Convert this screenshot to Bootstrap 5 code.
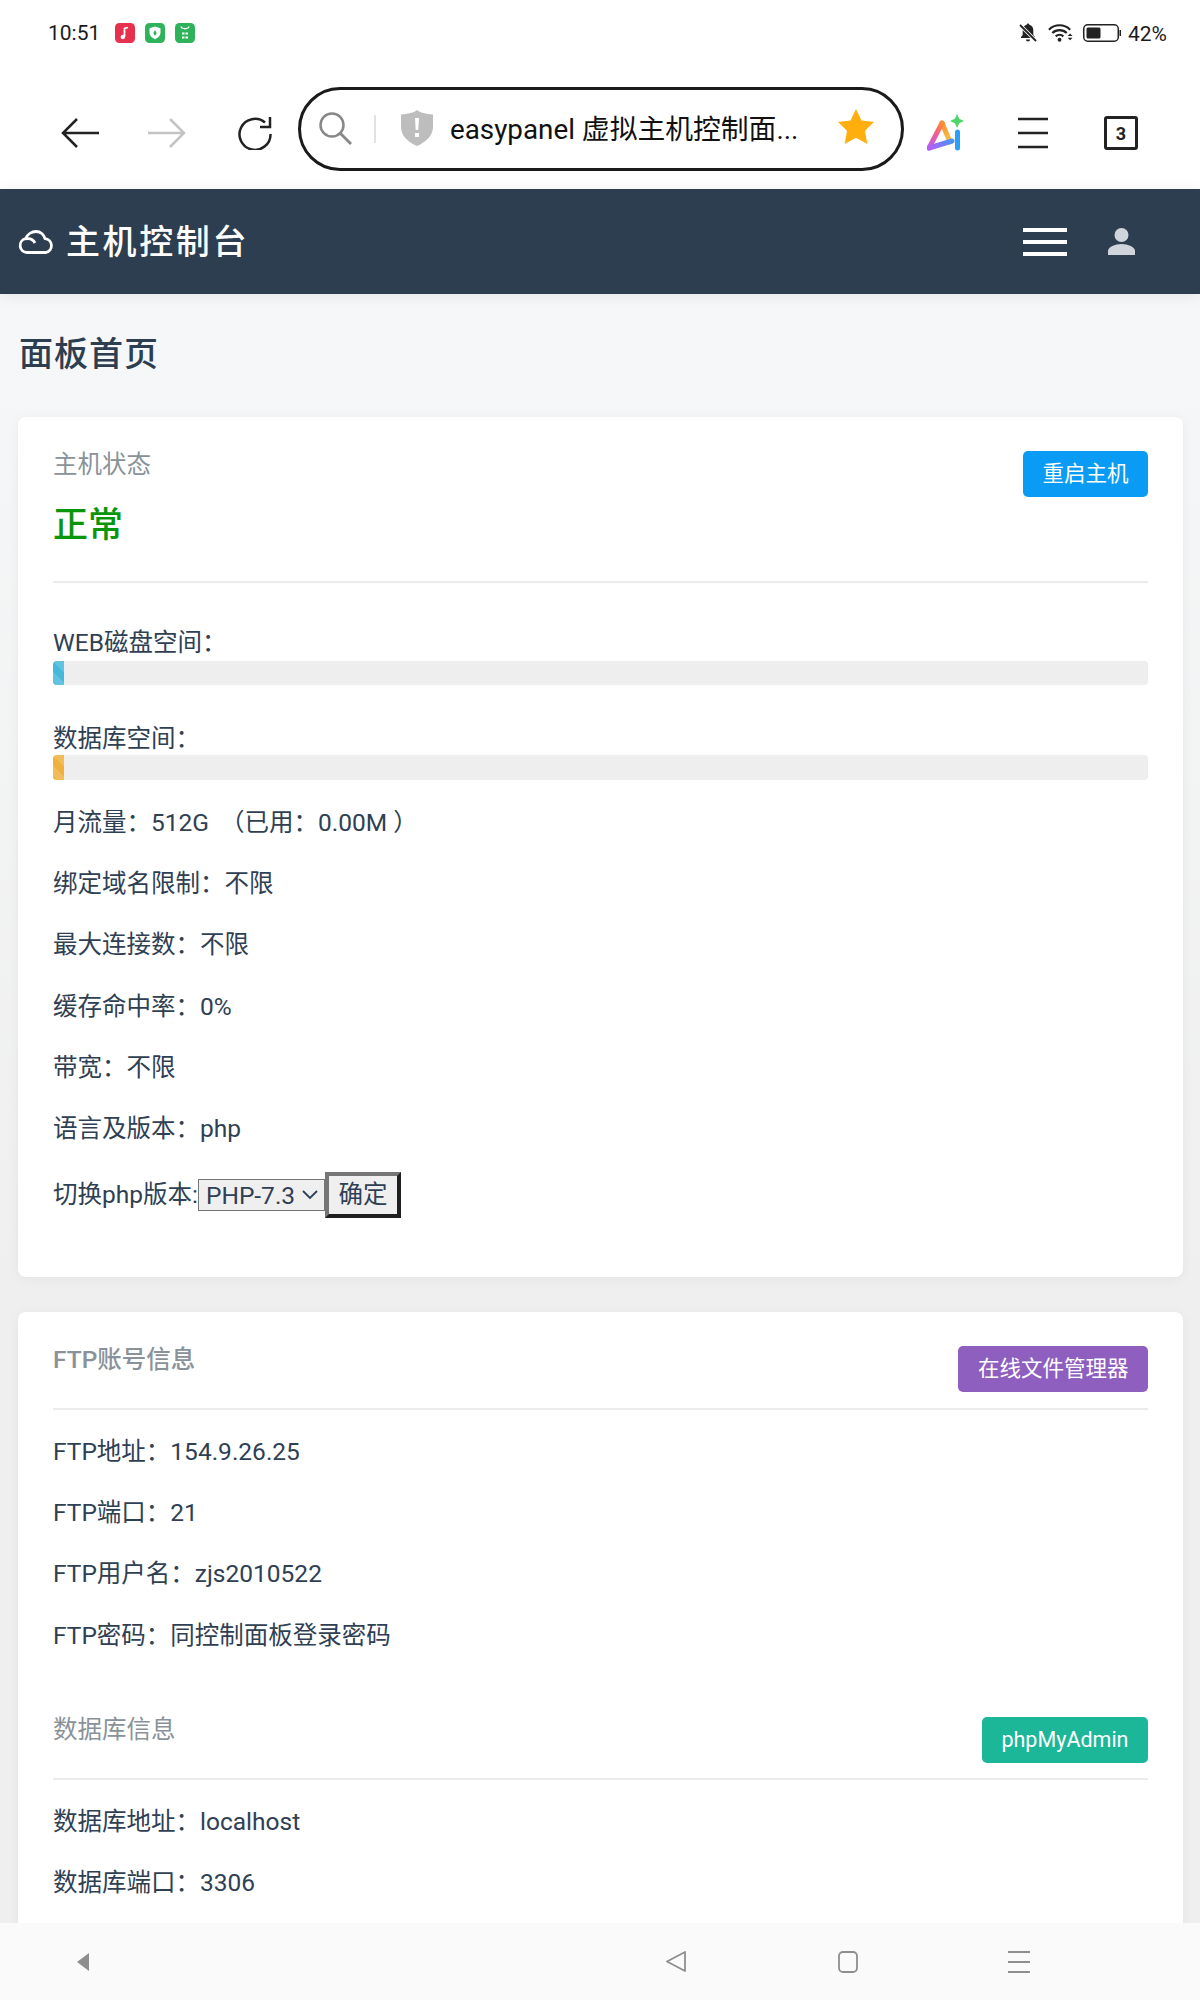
<!DOCTYPE html>
<html lang="zh">
<head>
<meta charset="utf-8">
<title>easypanel</title>
<link href="https://cdn.jsdelivr.net/npm/bootstrap@5.3.0/dist/css/bootstrap.min.css" rel="stylesheet">
<style>
html,body{margin:0;background:#fff}
body{font-family:"Roboto","Noto Sans CJK SC",sans-serif;color:#2f4053}
.screen{height:2000px;overflow:hidden}
.status-strip{height:66px;padding:0 33px 0 48px;color:#1b1b1b;font-size:21px}
.status-time{margin-top:2px}
.status-apps{gap:10px;margin-left:15px}
.status-right{gap:10px}
.status-pct{margin-left:-3px;margin-top:3px}
.toolbar{height:123px;padding:11px 0 0 61px}
.tool-back{width:38px;height:30px}
.tool-fwd{width:38px;height:30px;margin-left:49px}
.tool-reload{width:34px;height:34px;margin-left:52px}
.addr{width:606px;height:84px;margin:0 0 9px 26px;border:3px solid #1a1a1a;border-radius:42px;padding:0 27px 0 18px}
.addr-sep{width:2px;height:28px;background:#e2e2e2;margin:0 25px 0 22px}
.addr-shield{margin-top:-2px}
.addr-text{font-size:27.8px;color:#111;white-space:nowrap;margin:0 0 0 17px;padding-top:2px}
.addr-star{margin-left:auto;margin-bottom:4px}
.tool-ai{margin-left:23px}
.tool-menu{margin-left:53px}
.tool-tabs{width:34px;height:34px;border:3px solid #222;border-radius:3px;margin-left:56px;font-size:18px;font-weight:700;color:#222}
.panel-bar{height:105px;background:#2c3e50;padding:0 65px 0 18px;box-shadow:0 2px 14px rgba(0,0,0,.08);position:relative}
.panel-title{font-size:34px;font-weight:500;letter-spacing:2.600px;color:#fff;margin-left:12px;line-height:1}
.panel-burger{width:44px;height:28px;flex-direction:column;justify-content:space-between}
.panel-burger i{display:block;height:4px;background:#fff}
.panel-user{margin-left:41px}
.page-body{background:#f0f0f0 linear-gradient(#f6f7f8,#efefef 1000px,#efefef);padding:0 17px 0 18px;min-height:0}
.page-heading{font-size:34px;font-weight:500;letter-spacing:1px;color:#2c3e50;line-height:46px;margin:37px 0 0 1px}
.sheet{background:#fff;border-radius:8px;box-shadow:0 2px 12px rgba(0,0,0,.05);padding:0 35px}
.sheet-a{margin-top:40px;height:860px}
.sheet-b{margin-top:35px;padding-bottom:90px}
.head-a{padding:30px 0 31px}
.head-b{padding:34px 0 16px}
.head-c{padding:38px 0 15px}
.muted-label{font-size:24.5px;line-height:36px;color:#8a9299}
.head-b .muted-label{margin-top:-4px}
.head-c .muted-label{margin-top:-5px}
.status-ok{font-size:35px;line-height:48px;color:#0a960a;font-weight:500;margin-top:19px}
.restart-wrap{padding-top:4px}
.head-line{border-bottom:2px solid #e9ebec}
.act-btn{font-size:21.5px;line-height:30px;height:46px;padding:8px 19.500px;border:0;border-radius:5px;color:#fff}
.act-blue{background:#0a9bf5}
.act-purple{background:#8f5fc0}
.act-teal{background:#1cb698}
.info-row{font-size:24.5px;line-height:36px;margin:0 0 25.200px}
.first-row{margin-top:24px}
.gauge-label{font-size:24.5px;line-height:36px;margin:0}
.gauge-label-web{margin-top:42px}
.gauge-label-db{margin:36px 0 -2px}
.gauge{height:24px;background:#eee;border-radius:4px;overflow:hidden}
.gauge-db{height:25px;margin-bottom:25px}
.gauge-fill{width:11px;height:100%;background-size:20px 20px;background-image:linear-gradient(45deg,rgba(255,255,255,.15) 25%,transparent 25%,transparent 50%,rgba(255,255,255,.15) 50%,rgba(255,255,255,.15) 75%,transparent 75%,transparent)}
.fill-info{background-color:#46b8da}
.fill-warn{background-color:#f0b03c}
.php-form{font-size:24.5px;line-height:36px}
.php-select{font-family:inherit;font-size:24.5px;line-height:normal;color:#2f4053;height:32px;width:127px;padding:0 0 0 7px;border:1.5px solid #767676;border-radius:0;appearance:none;background:#efefef url("data:image/svg+xml,%3Csvg xmlns='http://www.w3.org/2000/svg' width='16' height='10'%3E%3Cpath d='M1 1l7 7 7-7' fill='none' stroke='%232f4053' stroke-width='1.800'/%3E%3C/svg%3E") no-repeat right 6px center}
.php-submit{font-family:inherit;font-size:24.5px;color:#2f4053;background:#efefef;border:4px solid;border-color:#767676 #1f1f1f #1f1f1f #767676;height:46px;width:76px;padding:0;line-height:1}
.navstrip{height:77px;background:#fafafa}
.nav-a{margin-left:77px}
.nav-b{margin-left:577px}
.nav-c{margin-left:152px}
.nav-d{margin-left:150px}
</style>
</head>
<body>
<div class="screen d-flex flex-column">
  <div class="status-strip d-flex align-items-center flex-shrink-0">
    <span class="status-time">10:51</span>
    <div class="status-apps d-flex">
      <svg width="20" height="20" viewBox="0 0 20 20"><rect width="20" height="20" rx="4.500" fill="#e6304e"/><path d="M9.500 14V5.500l3.500-1" fill="none" stroke="#fff" stroke-width="1.800"/><circle cx="7.800" cy="14" r="2.200" fill="#fff"/></svg>
      <svg width="20" height="20" viewBox="0 0 20 20"><rect width="20" height="20" rx="4.500" fill="#2fb35a"/><path d="M10 3.500l5.500 1.800v4.500c0 3-2.500 5.200-5.500 6.500-3-1.300-5.500-3.500-5.500-6.500V5.300z" fill="#fff"/><path d="M10 7l1.700 3-1.700 3-1.700-3z" fill="#2fb35a"/></svg>
      <svg width="20" height="20" viewBox="0 0 20 20"><rect width="20" height="20" rx="4.500" fill="#2fb35a"/><path d="M6 3.500c.5 3 7.500 3 8 0" fill="none" stroke="#fff" stroke-width="1.300"/><path d="M7 10.500h2.500M10.500 10.500H13M7 14.500h2.500M10.500 14.500H13" stroke="#fff" stroke-width="1.800"/></svg>
    </div>
    <div class="ms-auto d-flex align-items-center status-right">
      <svg width="20" height="20" viewBox="0 0 20 20"><path d="M10 .5a1.300 1.300 0 0 1 1.300 1.300c2.600.6 4 2.700 4 5.200v5l1.700 2v1H3v-1l1.700-2V7c0-2.500 1.400-4.600 4-5.200A1.300 1.300 0 0 1 10 .5zM8 16.500h4a2 2 0 0 1-4 0z" fill="#222"/><path d="M2 2l16 16" stroke="#fff" stroke-width="3.500"/><path d="M2 2l16 16" stroke="#222" stroke-width="1.800"/></svg>
      <svg width="25" height="20" viewBox="0 0 26 20"><path d="M1 6.500C7 .5 17 .5 23 6.500M4.500 10c4-4 11-4 15 0M8 13.500c2.300-2 5.700-2 8 0" fill="none" stroke="#222" stroke-width="2.200"/><circle cx="12" cy="17" r="2" fill="#222"/><path d="M20.500 13h5l-2.500-2.500zM20.500 15h5L23 17.500z" fill="#222"/></svg>
      <svg width="38" height="18" viewBox="0 0 38 18"><rect x=".75" y=".75" width="34.500" height="16.500" rx="4" fill="#fff" stroke="#222" stroke-width="1.500"/><rect x="3.500" y="3.500" width="14" height="11" rx="1.500" fill="#222"/><rect x="36.500" y="6" width="1.500" height="6" fill="#222"/></svg>
      <span class="status-pct">42%</span>
    </div>
  </div>
  <div class="toolbar d-flex align-items-center flex-shrink-0">
    <svg class="tool-back flex-shrink-0" viewBox="0 0 38 30"><path d="M38 15H2M16 1L2 15l14 14" fill="none" stroke="#222" stroke-width="2.500"/></svg>
    <svg class="tool-fwd flex-shrink-0" viewBox="0 0 38 30"><path d="M0 15h36M22 1l14 14-14 14" fill="none" stroke="#c4c4c4" stroke-width="2.500"/></svg>
    <svg class="tool-reload flex-shrink-0" viewBox="0 0 34 34"><path d="M27 6.500A15.500 15.500 0 1 0 32.500 18" fill="none" stroke="#222" stroke-width="2.500"/><path d="M32 1v10H22" fill="none" stroke="#222" stroke-width="2.500"/></svg>
    <div class="addr d-flex align-items-center flex-shrink-0">
      <svg width="33" height="33" viewBox="0 0 33 33"><circle cx="13" cy="13" r="11.500" fill="none" stroke="#888" stroke-width="2.500"/><path d="M21.500 21.500L32 32" stroke="#888" stroke-width="2.800"/></svg>
      <span class="addr-sep"></span>
      <svg class="addr-shield" width="32" height="36" viewBox="0 0 32 36"><path d="M16 0c3 2.500 9 4 16 4.500v12C32 26 25 32 16 36 7 32 0 26 0 16.500v-12C7 4 13 2.500 16 0z" fill="#bdbdbd"/><path d="M14 8h4l-.7 12h-2.600zM14 23h4v4h-4z" fill="#fff"/></svg>
      <span class="addr-text">easypanel 虚拟主机控制面...</span>
      <svg class="addr-star" width="36" height="35" viewBox="0 0 36 35"><path d="M18 0l5.500 11.500L36 13l-9 8.800L29.300 35 18 28.800 6.700 35 9 21.800 0 13l12.500-1.500z" fill="#ffae0d"/></svg>
    </div>
    <svg class="tool-ai flex-shrink-0" width="38" height="38" viewBox="0 0 38 38"><defs><linearGradient id="aig1" gradientUnits="userSpaceOnUse" x1="2" y1="34" x2="15" y2="9"><stop offset="0" stop-color="#b85cf5"/><stop offset=".6" stop-color="#f0608a"/><stop offset="1" stop-color="#fb8f2e"/></linearGradient><linearGradient id="aig2" gradientUnits="userSpaceOnUse" x1="15" y1="9" x2="23" y2="28"><stop offset="0" stop-color="#fb8f2e"/><stop offset="1" stop-color="#f5c547"/></linearGradient><linearGradient id="aig3" gradientUnits="userSpaceOnUse" x1="2" y1="34" x2="30" y2="25"><stop offset="0" stop-color="#b85cf5"/><stop offset="1" stop-color="#2aa0fa"/></linearGradient></defs><path d="M15 9L23 28" fill="none" stroke="url(#aig2)" stroke-width="5" stroke-linecap="round"/><path d="M2 34L15 9" fill="none" stroke="url(#aig1)" stroke-width="5" stroke-linecap="round"/><path d="M2 34L25 27" fill="none" stroke="url(#aig3)" stroke-width="5" stroke-linecap="round"/><path d="M30.500 18V34" fill="none" stroke="#2aa0fa" stroke-width="5" stroke-linecap="round"/><path d="M30 0l2.200 4.800L37 7l-4.800 2.200L30 14l-2.200-4.800L23 7l4.800-2.200z" fill="#4fd66a"/></svg>
    <svg class="tool-menu flex-shrink-0" width="30" height="32" viewBox="0 0 30 32"><path d="M0 2h30M0 16h30M0 30h30" stroke="#222" stroke-width="2.500"/></svg>
    <div class="tool-tabs d-flex align-items-center justify-content-center flex-shrink-0">3</div>
  </div>
  <div class="panel-bar d-flex align-items-center flex-shrink-0">
    <svg width="36" height="24" viewBox="0 0 36 24"><path d="M9 22.500a7 7 0 0 1-1.500-13.800C9.500 4 14 1.500 18 1.500c4.500 0 8 3 9 7.200a7 7 0 0 1 1 13.800zM8 9c4-1 7 .5 9 4" fill="none" stroke="#fff" stroke-width="2.800" stroke-linejoin="round"/></svg>
    <span class="panel-title">主机控制台</span>
    <div class="ms-auto d-flex panel-burger"><i></i><i></i><i></i></div>
    <svg class="panel-user" width="27" height="27" viewBox="0 0 27 27"><circle cx="13.500" cy="7" r="7" fill="#d0d5db"/><path d="M0 27v-4c0-4 7-7 13.500-7S27 19 27 23v4z" fill="#d0d5db"/></svg>
  </div>
  <div class="page-body flex-grow-1 overflow-hidden">
    <h1 class="page-heading">面板首页</h1>
    <div class="sheet sheet-a">
      <div class="d-flex justify-content-between head-line head-a">
        <div>
          <div class="muted-label">主机状态</div>
          <div class="status-ok">正常</div>
        </div>
        <div class="restart-wrap"><button class="act-btn act-blue" type="button">重启主机</button></div>
      </div>
      <div class="gauge-label gauge-label-web">WEB磁盘空间：</div>
      <div class="gauge"><div class="gauge-fill fill-info"></div></div>
      <div class="gauge-label gauge-label-db">数据库空间：</div>
      <div class="gauge gauge-db"><div class="gauge-fill fill-warn"></div></div>
      <p class="info-row">月流量：512G &#8201;（已用：0.00M ）</p>
      <p class="info-row">绑定域名限制：不限</p>
      <p class="info-row">最大连接数：不限</p>
      <p class="info-row">缓存命中率：0%</p>
      <p class="info-row">带宽：不限</p>
      <p class="info-row">语言及版本：php</p>
      <form class="php-form d-flex align-items-center">
        <span>切换php版本:</span><select class="php-select"><option>PHP-7.3</option></select><input class="php-submit" type="button" value="确定">
      </form>
    </div>
    <div class="sheet sheet-b">
      <div class="d-flex justify-content-between align-items-start head-line head-b">
        <div class="muted-label fw-medium">FTP账号信息</div>
        <button class="act-btn act-purple" type="button">在线文件管理器</button>
      </div>
      <p class="info-row first-row">FTP地址：154.9.26.25</p>
      <p class="info-row">FTP端口：21</p>
      <p class="info-row">FTP用户名：zjs2010522</p>
      <p class="info-row">FTP密码：同控制面板登录密码</p>
      <div class="d-flex justify-content-between align-items-start head-line head-c">
        <div class="muted-label">数据库信息</div>
        <button class="act-btn act-teal" type="button">phpMyAdmin</button>
      </div>
      <p class="info-row first-row">数据库地址：localhost</p>
      <p class="info-row">数据库端口：3306</p>
    </div>
  </div>
  <div class="navstrip d-flex align-items-center flex-shrink-0">
    <svg class="nav-a" width="12" height="18" viewBox="0 0 12 18"><path d="M12 0v18L0 9z" fill="#8e8e8e"/></svg>
    <svg class="nav-b" width="20" height="21" viewBox="0 0 20 21"><path d="M19 1v19L1 10.500z" fill="none" stroke="#8e8e8e" stroke-width="1.800" stroke-linejoin="round"/></svg>
    <svg class="nav-c" width="20" height="22" viewBox="0 0 20 22"><rect x="1" y="1" width="18" height="20" rx="4" fill="none" stroke="#8e8e8e" stroke-width="1.800"/></svg>
    <svg class="nav-d" width="22" height="22" viewBox="0 0 22 22"><path d="M0 1h22M0 11h22M0 21h22" stroke="#8e8e8e" stroke-width="1.800"/></svg>
  </div>
</div>
<script src="https://cdn.jsdelivr.net/npm/bootstrap@5.3.0/dist/js/bootstrap.bundle.min.js"></script>
</body>
</html>
